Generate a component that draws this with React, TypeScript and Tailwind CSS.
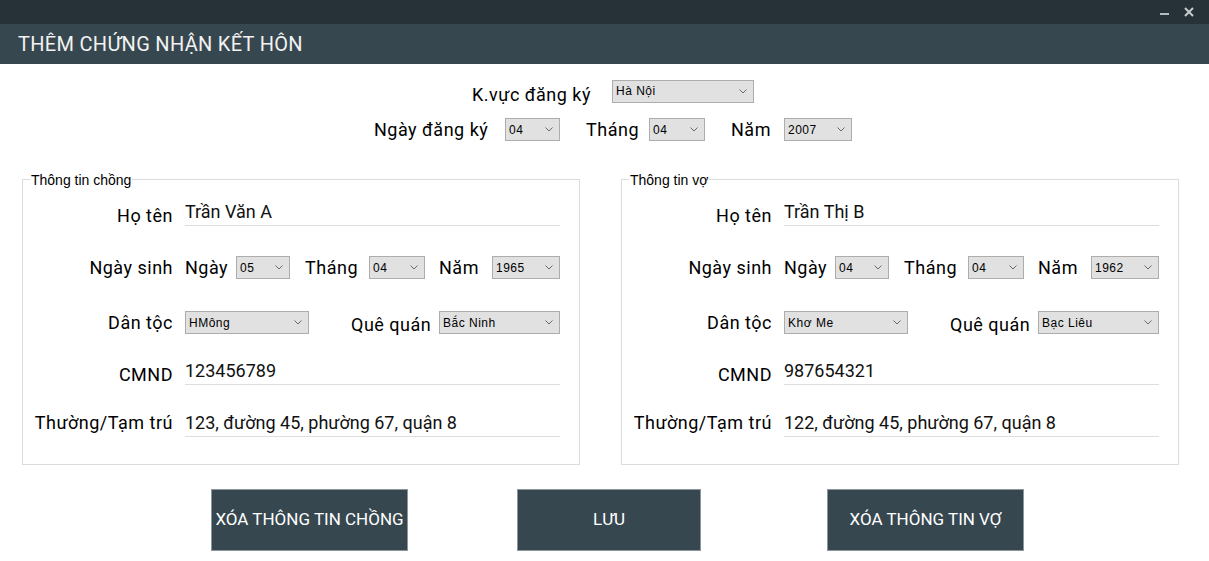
import React from 'react'

const label = "font-['Roboto',sans-serif] text-[18px] leading-[21px] tracking-[0.5px] text-black"
const value = "font-['Roboto',sans-serif] text-[18px] leading-[21px] text-[#111]"

function Combo({ value, w }: { value: string; w: string }) {
  return (
    <div
      className={`${w} h-[23px] shrink-0 flex items-center justify-between border border-[#adadad] bg-[#e1e1e1] pl-[3px] pr-[6px] font-['Liberation_Sans',Arial,sans-serif] text-[12px] tracking-[0.5px] text-black`}
    >
      <span>{value}</span>
      <svg width="8" height="5" viewBox="0 0 8 5">
        <path d="M0.5 0.5 L4 4 L7.5 0.5" fill="none" stroke="#6a6a6a" strokeWidth="1" />
      </svg>
    </div>
  )
}

interface PersonProps {
  title: string
  name: string
  day: string
  month: string
  year: string
  ethnic: string
  home: string
  id: string
  address: string
}

function TextRow({ text, val, lift }: { text: string; val: string; lift: string }) {
  return (
    <div className="flex items-start h-[25px]">
      <div className={`w-[150px] shrink-0 text-right whitespace-nowrap ${lift} ${label}`}>{text}</div>
      <div className={`ml-[12px] w-[375px] h-[25px] border-b border-[#dedede] ${value}`}>{val}</div>
    </div>
  )
}

function Person(p: PersonProps) {
  return (
    <div className="relative w-[558px] h-[286px] shrink-0 border border-[#dcdcdc]">
      <span className="absolute top-[-8px] left-[7px] px-[1px] bg-white font-['Liberation_Sans',Arial,sans-serif] text-[14px] leading-[16px] text-black">
        {p.title}
      </span>

      <div className="flex flex-col pt-[21px]">
        <TextRow text="Họ tên" val={p.name} lift="pt-[4px]" />

        <div className="mt-[30px] flex items-center h-[23px]">
          <div className={`w-[150px] shrink-0 text-right ${label}`}>Ngày sinh</div>
          <span className={`ml-[12px] w-[51px] shrink-0 ${label}`}>Ngày</span>
          <Combo value={p.day} w="w-[54px]" />
          <span className={`ml-[15px] w-[64px] shrink-0 ${label}`}>Tháng</span>
          <Combo value={p.month} w="w-[56px]" />
          <span className={`ml-[14px] w-[53px] shrink-0 ${label}`}>Năm</span>
          <Combo value={p.year} w="w-[68px]" />
        </div>

        <div className="mt-[32px] flex items-center h-[23px]">
          <div className={`w-[150px] shrink-0 text-right ${label}`}>Dân tộc</div>
          <div className="ml-[12px]">
            <Combo value={p.ethnic} w="w-[124px]" />
          </div>
          <span className={`ml-[42px] w-[88px] shrink-0 pt-[3px] whitespace-nowrap ${label}`}>Quê quán</span>
          <Combo value={p.home} w="w-[121px]" />
        </div>

        <div className="mt-[26px]">
          <TextRow text="CMND" val={p.id} lift="pt-[4px]" />
        </div>
        <div className="mt-[27px]">
          <TextRow text="Thường/Tạm trú" val={p.address} lift="pt-0" />
        </div>
      </div>
    </div>
  )
}

export default function App() {
  return (
    <div className="w-[1209px] h-[561px] overflow-hidden bg-white">
      {/* window chrome */}
      <div className="h-[24px] bg-[#263238] flex justify-end items-start pr-[15px]">
        <div className="mt-[13px] w-[9px] h-[2px] bg-[#b4babd]" />
        <svg className="ml-[15px] mt-[7px]" width="10" height="10" viewBox="0 0 10 10">
          <path d="M1 1 L9 9 M9 1 L1 9" stroke="#c8cccf" strokeWidth="2" />
        </svg>
      </div>
      <div className="h-[40px] bg-[#37474f] flex items-center pl-[18px]">
        <h1 className="font-['Roboto',sans-serif] text-[20px] text-[#f2f2f2] tracking-[0.3px]">
          THÊM CHỨNG NHẬN KẾT HÔN
        </h1>
      </div>

      {/* registration */}
      <div className="mt-[15px] pl-[472px] flex items-center h-[24px]">
        <span className={`w-[140px] shrink-0 pt-[6px] whitespace-nowrap ${label}`}>K.vực đăng ký</span>
        <Combo value="Hà Nội" w="w-[142px]" />
      </div>
      <div className="mt-[15px] pl-[374px] flex items-center h-[23px]">
        <span className={`w-[131px] shrink-0 whitespace-nowrap ${label}`}>Ngày đăng ký</span>
        <Combo value="04" w="w-[55px]" />
        <span className={`ml-[26px] w-[63px] shrink-0 ${label}`}>Tháng</span>
        <Combo value="04" w="w-[56px]" />
        <span className={`ml-[26px] w-[53px] shrink-0 ${label}`}>Năm</span>
        <Combo value="2007" w="w-[68px]" />
      </div>

      {/* husband / wife */}
      <div className="mt-[38px] pl-[22px] flex gap-[41px]">
        <Person
          title="Thông tin chồng"
          name="Trần Văn A"
          day="05"
          month="04"
          year="1965"
          ethnic="HMông"
          home="Bắc Ninh"
          id="123456789"
          address="123, đường 45, phường 67, quận 8"
        />
        <Person
          title="Thông tin vợ"
          name="Trần Thị B"
          day="04"
          month="04"
          year="1962"
          ethnic="Khơ Me"
          home="Bạc Liêu"
          id="987654321"
          address="122, đường 45, phường 67, quận 8"
        />
      </div>

      {/* actions */}
      <div className="mt-[24px] pl-[211px] flex">
        <button className="w-[197px] h-[62px] shrink-0 whitespace-nowrap bg-[#37474f] border border-[#8c979c] font-['Roboto',sans-serif] text-[17px] text-white">
          XÓA THÔNG TIN CHỒNG
        </button>
        <button className="ml-[109px] w-[184px] h-[62px] shrink-0 whitespace-nowrap bg-[#37474f] border border-[#8c979c] font-['Roboto',sans-serif] text-[17px] text-white">
          LƯU
        </button>
        <button className="ml-[126px] w-[197px] h-[62px] shrink-0 whitespace-nowrap bg-[#37474f] border border-[#8c979c] font-['Roboto',sans-serif] text-[17px] text-white">
          XÓA THÔNG TIN VỢ
        </button>
      </div>
    </div>
  )
}
